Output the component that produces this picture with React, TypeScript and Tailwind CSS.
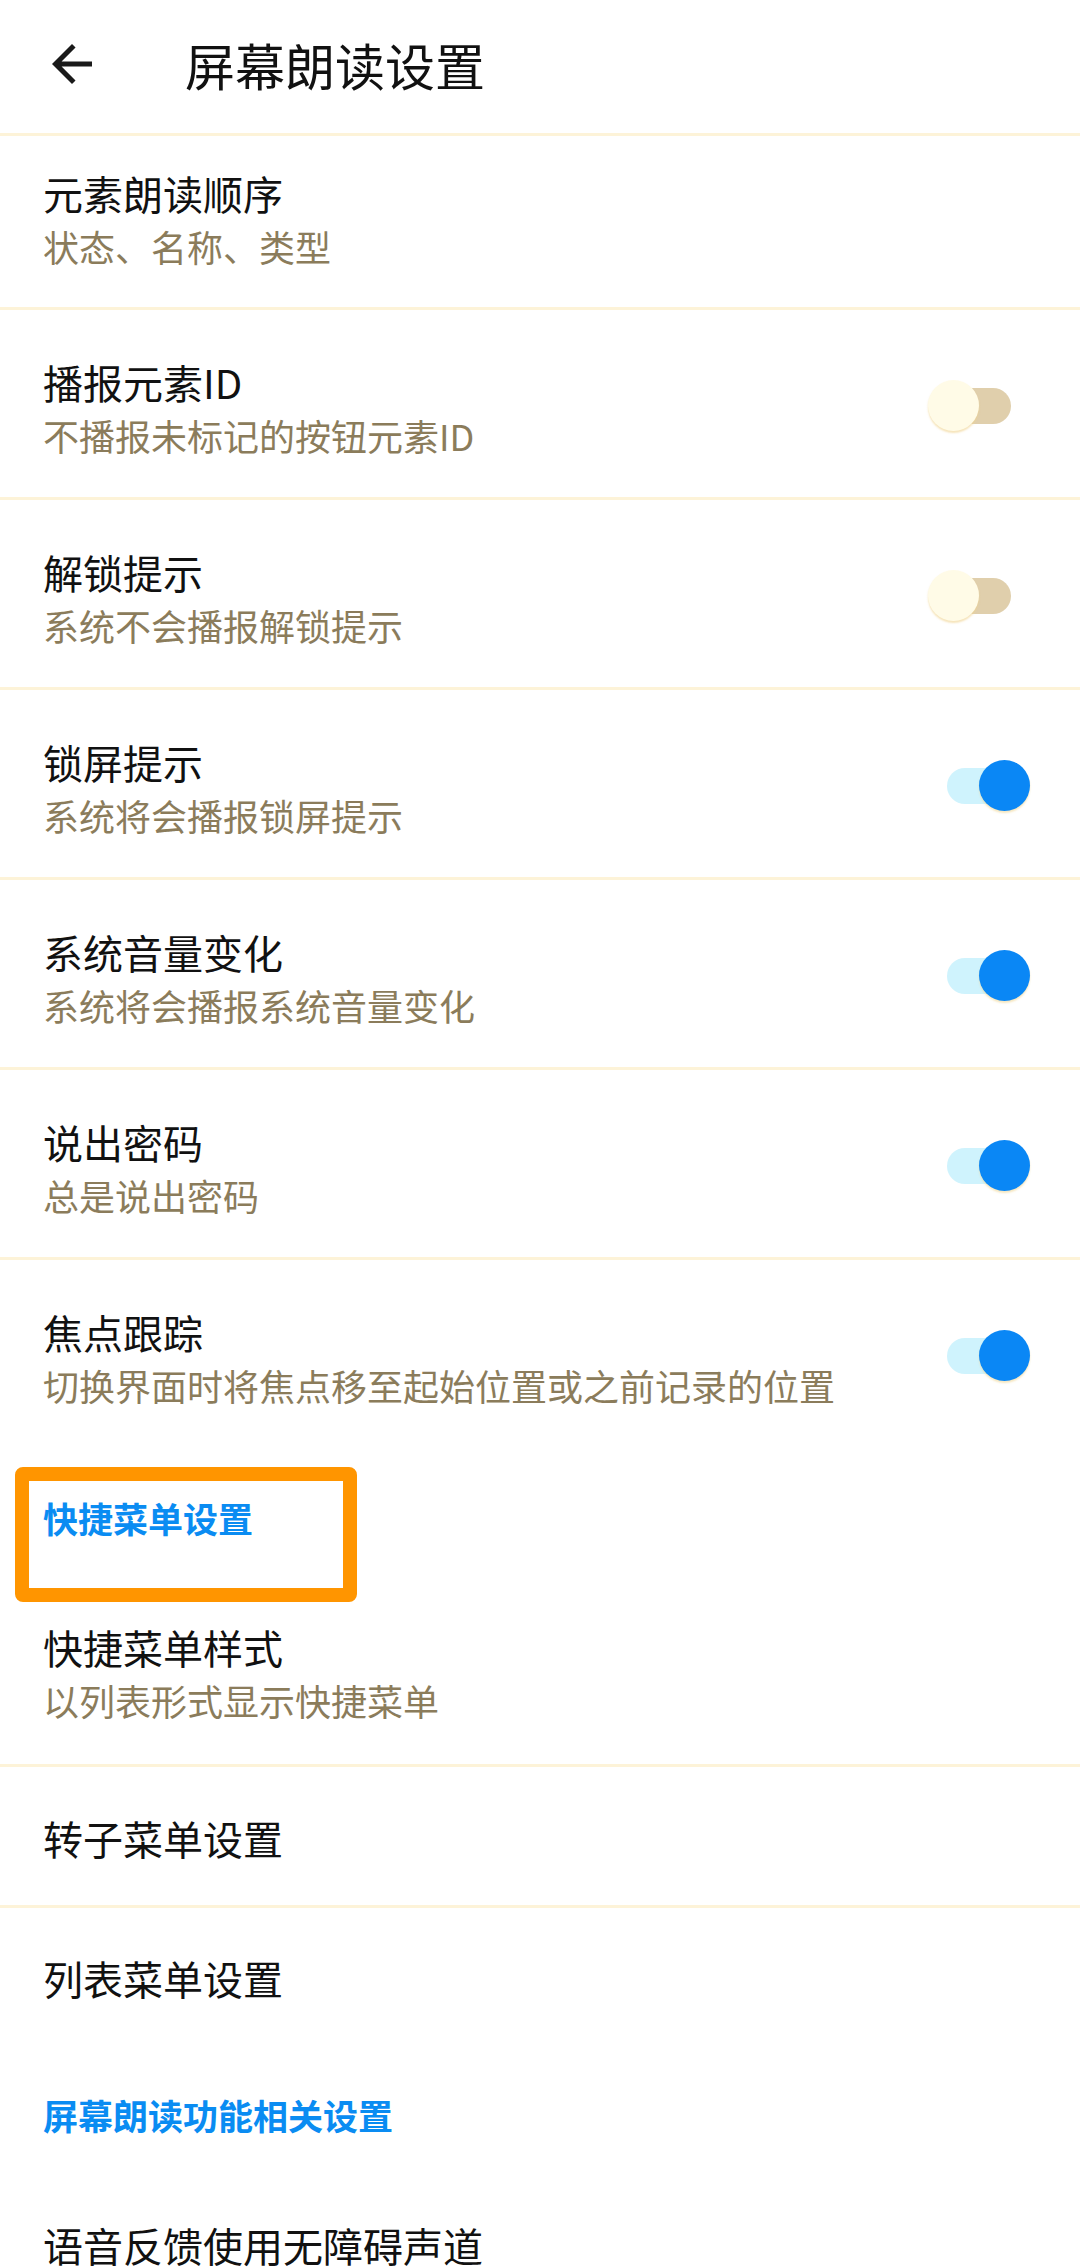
import React from "react";

type Row = { title: string; desc: string; on: boolean };

const rows: Row[] = [
  { title: "播报元素ID", desc: "不播报未标记的按钮元素ID", on: false },
  { title: "解锁提示", desc: "系统不会播报解锁提示", on: false },
  { title: "锁屏提示", desc: "系统将会播报锁屏提示", on: true },
  { title: "系统音量变化", desc: "系统将会播报系统音量变化", on: true },
  { title: "说出密码", desc: "总是说出密码", on: true },
  { title: "焦点跟踪", desc: "切换界面时将焦点移至起始位置或之前记录的位置", on: true },
];

const Toggle = ({ on }: { on: boolean }) => (
  <div className="relative w-[102px] h-[52px] shrink-0">
    <div
      className={
        "absolute left-[19px] top-[8px] w-[64px] h-[36px] rounded-full " +
        (on ? "bg-[#cff3fd]" : "bg-[#e0cfac]")
      }
    />
    {on ? (
      <div className="absolute left-[51px] top-0 w-[51px] h-[51px] rounded-full bg-[#0a87f5] shadow-[0_2px_2px_rgba(240,215,150,0.6)]" />
    ) : (
      <div className="absolute left-0 top-0 w-[51px] h-[51px] rounded-full bg-[#fffbe7] shadow-[0_2px_2px_rgba(240,210,140,0.6)]" />
    )}
  </div>
);

const Title = ({ children }: { children: React.ReactNode }) => (
  <div className="text-[40px] leading-[54px] text-[#111]">{children}</div>
);

const Desc = ({ children }: { children: React.ReactNode }) => (
  <div className="text-[36px] leading-[52px] text-[#8b7c5b]">{children}</div>
);

export default function App() {
  return (
    <div className="w-[1080px] h-[2267px] overflow-hidden bg-white font-['Noto_Sans_CJK_SC',sans-serif]">
      <header className="h-[136px] border-b-[3px] border-[#fdf3d8] flex items-center pb-[6px]">
        <svg viewBox="0 0 24 24" className="w-[60px] h-[60px] ml-[42px] text-[#1a1a1a]" fill="currentColor">
          <path d="M20 11H7.83l5.59-5.59L12 4l-8 8 8 8 1.41-1.41L7.83 13H20v-2z" />
        </svg>
        <h1 className="ml-[83px] text-[50px] leading-[60px] text-[#111]">屏幕朗读设置</h1>
      </header>

      <div className="h-[174px] border-b-[3px] border-[#fdf3d8] pl-[43px] pt-[30px]">
        <Title>元素朗读顺序</Title>
        <Desc>状态、名称、类型</Desc>
      </div>

      {rows.map((r, i) => (
        <div
          key={r.title}
          className={
            "h-[190px] flex justify-between pl-[43px] pr-[50px] pt-[45px] " +
            (i < rows.length - 1 ? "border-b-[3px] border-[#fdf3d8]" : "")
          }
        >
          <div>
            <Title>{r.title}</Title>
            <Desc>{r.desc}</Desc>
          </div>
          <div className="mt-[25px]">
            <Toggle on={r.on} />
          </div>
        </div>
      ))}

      <div className="mt-[17px] ml-[15px] w-[342px] h-[135px] border-[14px] border-[#ff9500] rounded-[8px] pl-[14px] pt-[17px]">
        <div className="text-[35px] leading-[40px] font-bold text-[#0a8cf2]">快捷菜单设置</div>
      </div>

      <div className="h-[165px] border-b-[3px] border-[#fdf3d8] pl-[43px] pt-[18px]">
        <Title>快捷菜单样式</Title>
        <Desc>以列表形式显示快捷菜单</Desc>
      </div>

      <div className="h-[141px] border-b-[3px] border-[#fdf3d8] pl-[43px] pt-[44px]">
        <Title>转子菜单设置</Title>
      </div>

      <div className="h-[140px] pl-[43px] pt-[43px]">
        <Title>列表菜单设置</Title>
      </div>

      <div className="pl-[43px] pt-[47px]">
        <div className="text-[35px] leading-[40px] font-bold text-[#0a8cf2]">屏幕朗读功能相关设置</div>
      </div>

      <div className="pl-[43px] pt-[83px]">
        <Title>语音反馈使用无障碍声道</Title>
      </div>
    </div>
  );
}
